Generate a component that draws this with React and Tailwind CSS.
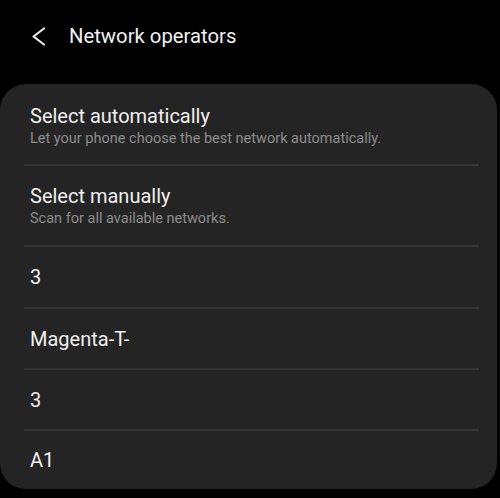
import React from "react";

function Divider() {
  return <div className="ml-[24px] mr-[18px] h-[2px] bg-[#343434]" />;
}

function TwoLine({ title, sub, h, pt }) {
  return (
    <div className={`${h} ${pt} pl-[30px] flex flex-col gap-[2px]`}>
      <div className="text-[20px] leading-[24px] text-[#f0f0f0]">{title}</div>
      <div className="text-[14.5px] leading-[18px] text-[#8c8c8c]">{sub}</div>
    </div>
  );
}

function OneLine({ title, h }) {
  return (
    <div className={`${h} pl-[30px] flex items-center`}>
      <div className="text-[20px] leading-[24px] text-[#f0f0f0]">{title}</div>
    </div>
  );
}

export default function App() {
  return (
    <div
      className="w-[500px] h-[498px] bg-black flex flex-col overflow-hidden"
      style={{ fontFamily: "Roboto, 'Noto Sans', sans-serif" }}
    >
      <div className="h-[84px] flex items-start pt-[24px]">
        <div className="w-[69px] h-[24px] flex items-center">
          <svg width="69" height="24" viewBox="0 0 69 24" className="shrink-0">
            <polyline
              points="44,4.5 33.5,12.5 44,20.5"
              fill="none"
              stroke="#ececec"
              strokeWidth="2.2"
              strokeLinecap="round"
              strokeLinejoin="round"
            />
          </svg>
        </div>
        <div className="text-[20.3px] leading-[24px] text-[#f0f0f0]">Network operators</div>
      </div>
      <div className="w-[497px] h-[405px] bg-[#242424] rounded-[26px] flex flex-col">
        <TwoLine
          title="Select automatically"
          sub="Let your phone choose the best network automatically."
          h="h-[80px]"
          pt="pt-[20px]"
        />
        <Divider />
        <TwoLine
          title="Select manually"
          sub="Scan for all available networks."
          h="h-[79px]"
          pt="pt-[18px]"
        />
        <Divider />
        <OneLine title="3" h="h-[60px]" />
        <Divider />
        <OneLine title="Magenta-T-" h="h-[59px]" />
        <Divider />
        <OneLine title="3" h="h-[59px]" />
        <Divider />
        <OneLine title="A1" h="h-[58px]" />
      </div>
    </div>
  );
}
